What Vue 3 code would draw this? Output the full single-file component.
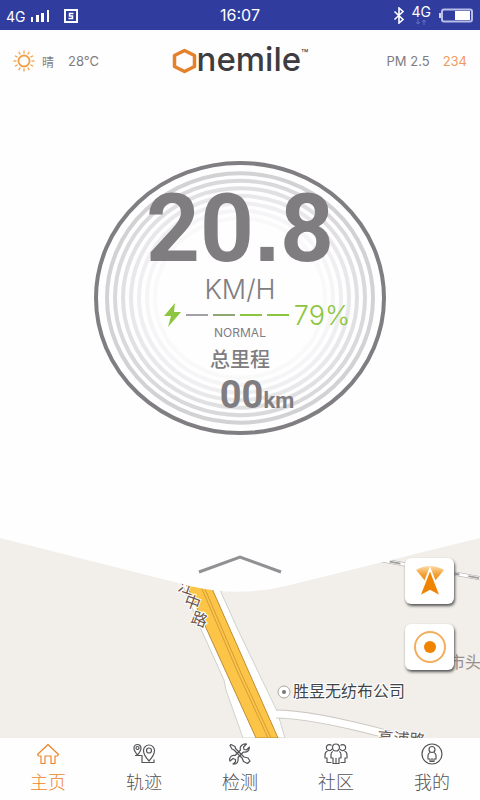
<template>
  <div class="app">
    <div class="status">
      <div class="status__side">
        <span>4G</span>
        <svg width="20" height="14" viewBox="0 0 20 14" fill="#fff">
          <path d="M1 8h2v5H1zM6 6h3v7H6zM11 4h3v9h-3zM17 1h2v12h-2z" />
        </svg>
        <svg class="status__card" width="14" height="14" viewBox="0 0 14 14" fill="none" stroke="#fff">
          <path d="M1 1h12v12H1zM0 1h3" stroke-width="2" />
          <path d="M9.500 4.500h-4V7h3v2.500h-4" stroke-width="1.500" />
        </svg>
      </div>
      <time class="status__time">16:07</time>
      <div class="status__side status__side--end">
        <svg width="12" height="17" viewBox="0 0 12 17" fill="none" stroke="#fff" stroke-width="1.600">
          <path d="M1.500 4.500l8.500 8-4 3.500V1l4 3.500-8.500 8" />
        </svg>
        <span class="status__net">
          4G
          <svg width="12" height="6" viewBox="0 0 12 6" fill="none" stroke="#6470c4">
            <path d="M3 0v5M1 3l2 2 2-2M9 6V1M7 3l2-2 2 2" />
          </svg>
        </span>
        <svg width="36" height="15" viewBox="0 0 36 15">
          <path d="M1 5h3v5H1z" fill="#cdd1ef" />
          <rect x="4" y="1.500" width="30" height="12" rx="2" fill="none" stroke="#b9bee6" stroke-width="2" />
          <path d="M17 3h15v9H17z" fill="#fff" />
        </svg>
      </div>
    </div>

    <header class="header">
      <div class="header__side">
        <svg class="sun" width="22" height="22" viewBox="0 0 22 22" fill="none" stroke="#f0a043">
          <circle cx="11" cy="11" r="5.500" stroke-width="1.800" />
          <path
            v-for="n in 12"
            :key="n"
            d="M11 0.500v3"
            stroke-width="1.300"
            :transform="`rotate(${n * 30} 11 11)`"
          />
        </svg>
        <span class="header__sky">晴</span>
        <span>28°C</span>
      </div>
      <h1 class="logo">
        <svg width="25" height="26" viewBox="0 0 25 26" role="img" aria-label="O">
          <path d="M12.500 2.500L22.500 7.500v11l-10 5-10-5v-11z" fill="none" stroke="#e5812b" stroke-width="3.500" stroke-linejoin="round" />
        </svg>
        <span>nemile</span><sup>™</sup>
      </h1>
      <div class="header__side header__side--end">
        <span>PM 2.5</span>
        <span class="header__value">234</span>
      </div>
    </header>

    <main class="dashboard">
      <section class="gauge">
        <svg class="gauge__rings" viewBox="0 0 292 276" fill="none">
          <ellipse
            v-for="ring in rings"
            :key="ring.rx"
            cx="146"
            cy="138"
            :rx="ring.rx"
            :ry="ring.rx * 0.9375"
            :stroke="ring.color"
            stroke-width="4"
          />
        </svg>
        <div class="gauge__body">
          <div class="speed">20<span class="speed__point">.</span>8</div>
          <div class="unit">KM/H</div>
          <div class="battery">
            <svg width="17" height="24" viewBox="0 0 17 24" fill="#8cc63f">
              <path d="M11 0L0 13h7L4 24 17 9h-7z" />
            </svg>
            <span
              v-for="(cell, i) in cells"
              :key="i"
              class="battery__cell"
              :class="`battery__cell--${cell}`"
            />
            <span class="battery__percent">79%</span>
          </div>
          <div class="mode">NORMAL</div>
          <div class="total-label">总里程</div>
          <div class="total">00<small>km</small></div>
        </div>
      </section>
    </main>

    <section class="map">
      <svg class="map__canvas" viewBox="0 0 480 200" preserveAspectRatio="xMidYMin slice">
        <!-- main road -->
        <path d="M178 35L200 89 224 142l2 10 17 48h42l-8-27-39-81-18-40z" fill="#fff" stroke="#cfd3cb" />
        <path d="M182 37l74 163h22L206 37z" fill="#fdc548" stroke="#bd8d35" />
        <path d="M196 37l42 98 30 65M199 37l42 98 30 65" fill="none" stroke="#d39c38" />
        <!-- side road -->
        <path d="M276 176q35 0 110 20l24 7" fill="none" stroke="#cdc9c4" stroke-width="9" />
        <path d="M273 176q38 0 113 20l24 7" fill="none" stroke="#fff" stroke-width="7" />
        <!-- railway -->
        <path d="M370 20l114 21" stroke="#a9a6a5" stroke-width="4" />
        <path d="M370 20l114 21" stroke="#fff" stroke-width="3" />
        <path d="M370 20l114 21" stroke="#a09d9c" stroke-width="2" stroke-dasharray="11 9" />
        <g class="map__road-name">
          <text transform="translate(177 52) rotate(20)">江</text>
          <text transform="translate(183 67) rotate(20)">中</text>
          <text transform="translate(190 84) rotate(20)">路</text>
          <text transform="translate(377 205) rotate(4)">高浦路</text>
        </g>
        <text x="449" y="130" class="map__area">市头</text>
        <circle cx="284" cy="154" r="6" fill="#fff" stroke="#aaa" />
        <circle cx="284" cy="154" r="2" fill="#777" />
        <text x="293" y="159" class="map__place">胜昱无纺布公司</text>
        <path d="M0 0l190 48q50 12 100-1L480 0V-1H0z" fill="#fefefe" />
      </svg>
      <button class="map__toggle" type="button" aria-label="展开">
        <svg width="84" height="20" viewBox="0 0 84 20" fill="none" stroke="#929094" stroke-width="3">
          <path d="M1 18L42 3l41 15" />
        </svg>
      </button>
      <div class="map__tools">
        <button class="tool" type="button" aria-label="导航">
          <svg width="30" height="32" viewBox="0 0 30 32">
            <defs>
              <linearGradient id="beam" x1="0" y1="0" x2="0" y2="1">
                <stop offset="0" stop-color="#fbdca8" />
                <stop offset="0.500" stop-color="#f4a23a" />
                <stop offset="1" stop-color="#f08300" />
              </linearGradient>
            </defs>
            <path d="M1 5Q15-3 29 5L19 17h-8z" fill="url(#beam)" />
            <path d="M15 4l11 28-11-6-11 6z" fill="#f08300" stroke="#fff" stroke-width="2" />
          </svg>
        </button>
        <button class="tool" type="button" aria-label="定位">
          <svg width="34" height="34" viewBox="0 0 34 34">
            <circle cx="17" cy="17" r="15" fill="none" stroke="#f2ae5c" stroke-width="2" />
            <circle cx="17" cy="17" r="6" fill="#f08300" />
          </svg>
        </button>
      </div>
    </section>

    <nav class="tabs">
      <a
        v-for="tab in tabs"
        :key="tab.label"
        href="#"
        class="tabs__item"
        :class="{ 'is-active': tab.active }"
      >
        <svg width="24" height="22" viewBox="0 0 24 22" fill="none" stroke="currentColor" stroke-width="1.200" stroke-linejoin="round">
          <path v-for="d in tab.paths" :key="d" :d="d" />
        </svg>
        <span>{{ tab.label }}</span>
      </a>
    </nav>
  </div>
</template>

<script setup>
const rings = [
  { rx: 144, color: "#807e82" },
  { rx: 133, color: "#d2d1d4" },
  { rx: 125, color: "#d9d8db" },
  { rx: 117, color: "#e0dfe2" },
  { rx: 109, color: "#e8e7e9" },
  { rx: 101, color: "#efeef0" },
  { rx: 93, color: "#f5f4f6" },
  { rx: 85, color: "#f9f9fa" },
];

const cells = ["empty", "half", "full", "full"];

const tabs = [
  {
    label: "主页",
    active: true,
    paths: ["M12 1.500L1.500 11.500l1 1.500H5v7.500h4V13h6v7.500h4V13h2.500l1-1.500z"],
  },
  {
    label: "轨迹",
    paths: [
      "M5.500 12Q2 8 2 5a3.500 3.500 0 0 1 7 0q0 3-3.500 7zM4 5a1.500 1.500 0 1 0 3 0 1.500 1.500 0 1 0-3 0",
      "M17 18Q11.500 12 11.500 7.500a5.500 5.500 0 0 1 11 0Q22.500 12 17 18zM14.500 7.500a2.500 2.500 0 1 0 5 0 2.500 2.500 0 1 0-5 0",
      "M3 12.500h7v7h12v-3",
    ],
  },
  {
    label: "检测",
    paths: [
      "M3 1.500l4 2 .5 2L16 14l4 1 2 3-2.500 2.500-4-2L14 15 6 7 4 6 2 2.500z",
      "M21.500 4l-3 3-2.500-.5L15.500 4l3-3q-3-.5-5 1.500T12.500 7L7 12.500q-3-.5-4.500 1.500T2 18l3-2.500 2.500 1V19l-2.500 2q6 .5 5-6.500L15.500 9Q21 10 21.500 4z",
    ],
  },
  {
    label: "社区",
    paths: [
      "M8.500 4.500a3.500 3.500 0 1 0 7 0 3.500 3.500 0 1 0-7 0",
      "M8 6A3 3 0 1 1 7.500 2.500M16 6a3 3 0 1 0 .5-3.500",
      "M9 8.500q-2 .5-2 3V15h2v5.500h6V15h2v-3.500q0-2.500-2-3M12 15v5",
      "M3.500 8Q1 9 1 12v3h2v4.500h4.500M20.500 8q2.500 1 2.500 4v3h-2v4.500h-4.500",
    ],
  },
  {
    label: "我的",
    paths: [
      "M2 11a10 10 0 1 0 20 0 10 10 0 1 0-20 0",
      "M9 6.500a3 3 0 1 0 6 0 3 3 0 1 0-6 0",
      "M10 9.500q-2 1-2 3V16h2v2.500h4V16h2v-3.500q0-2-2-3M12 15v3",
    ],
  },
];
</script>

<style>
body {
  margin: 0;
}
</style>

<style scoped>
.app {
  display: flex;
  flex-direction: column;
  min-height: 100vh;
  background: #fefefe;
  color: #807d81;
  font-family: Inter, "Noto Sans CJK SC", sans-serif;
}

svg {
  display: block;
  flex: none;
}

button {
  padding: 0;
  border: 0;
  background: none;
}

.status {
  display: flex;
  align-items: center;
  height: 30px;
  padding: 0 6px;
  background: #303d9f;
  color: #fff;
  font-size: 14px;
}

.status__side {
  display: flex;
  flex: 1;
  align-items: center;
  gap: 4px;
  padding-top: 2px;
}

.status__side--end {
  justify-content: flex-end;
  gap: 7px;
  padding-top: 0;
}

.status__card {
  margin-left: 10px;
}

.status__time {
  font-size: 16px;
}

.status__net {
  line-height: 14px;
}

.status__net svg {
  margin: 0 auto;
}

.header {
  display: flex;
  align-items: center;
  height: 62px;
  padding: 0 13px;
  font-size: 13px;
}

.header__side {
  display: flex;
  flex: 1;
  align-items: center;
}

.header__side--end {
  justify-content: flex-end;
  gap: 13px;
}

.header__sky {
  margin: 0 14px 0 7px;
  font-size: 12px;
}

.header__value {
  color: #f09a5c;
}

.logo {
  display: flex;
  align-items: center;
  margin: 0;
  color: #3e3c40;
  font-size: 33px;
  font-weight: 500;
  line-height: 30px;
}

.logo span {
  margin-top: -4px;
}

.logo sup {
  align-self: flex-start;
  font-size: 12px;
  font-weight: 400;
  line-height: 12px;
}

.dashboard {
  display: flex;
  justify-content: center;
  padding: 68px 0 102px;
}

.gauge {
  position: relative;
  width: 292px;
}

.gauge__rings {
  position: absolute;
  inset: 0;
  width: 100%;
}

.gauge__body {
  position: relative;
  display: flex;
  flex-direction: column;
  align-items: center;
  padding: 35px 0 23px;
}

.speed {
  height: 68px;
  font: 700 94px/68px Roboto, sans-serif;
}

.speed__point {
  font-family: "Liberation Sans", sans-serif;
  line-height: 1px;
}

.unit {
  margin-top: 13px;
  font-size: 27px;
  font-weight: 300;
  line-height: 28px;
}

.battery {
  display: flex;
  align-items: center;
  gap: 5px;
  height: 22px;
  padding-left: 34px;
}

.battery__cell {
  width: 22px;
  height: 2px;
  background: #8cc63f;
}

.battery__cell--empty {
  background: #a3a1a5;
}

.battery__cell--half {
  background: #8fa574;
}

.battery__percent {
  color: #8cc63f;
  font-size: 27px;
  font-weight: 300;
}

.mode {
  font-size: 12px;
  line-height: 14px;
}

.total-label {
  margin-top: 8px;
  font-size: 20px;
  font-weight: 500;
  line-height: 24px;
}

.total {
  display: flex;
  align-items: baseline;
  height: 36px;
  margin-top: 5px;
  padding-left: 34px;
  font: 700 38px/36px Roboto, sans-serif;
}

.total small {
  font-size: 22px;
  line-height: 24px;
}

.map {
  position: relative;
  flex: 1;
  min-height: 200px;
  overflow: hidden;
  background: #f2eee9;
}

.map__canvas {
  width: 100%;
  height: 200px;
}

.map__road-name {
  fill: #6b5750;
  stroke: #fff;
  stroke-width: 2px;
  paint-order: stroke;
  font-size: 16px;
}

.map__area {
  fill: #98908c;
  font-size: 16px;
}

.map__place {
  fill: #3f4547;
  stroke: #fff;
  stroke-width: 2px;
  paint-order: stroke;
  font-size: 16px;
}

.map__toggle {
  position: absolute;
  top: 16px;
  left: 50%;
  transform: translateX(-50%);
}

.map__tools {
  position: absolute;
  top: 20px;
  right: 26px;
  display: grid;
  gap: 20px;
}

.tool {
  display: grid;
  place-items: center;
  width: 49px;
  height: 46px;
  border-radius: 6px;
  background: #fff;
  box-shadow: 1px 2px 3px #555;
}

.tabs {
  display: flex;
  height: 62px;
}

.tabs__item {
  display: flex;
  flex: 1;
  flex-direction: column;
  align-items: center;
  gap: 6px;
  padding-top: 5px;
  color: #555357;
  font-size: 18px;
  font-weight: 300;
  line-height: 24px;
  text-decoration: none;
}

.tabs__item.is-active {
  color: #ee8428;
}
</style>
